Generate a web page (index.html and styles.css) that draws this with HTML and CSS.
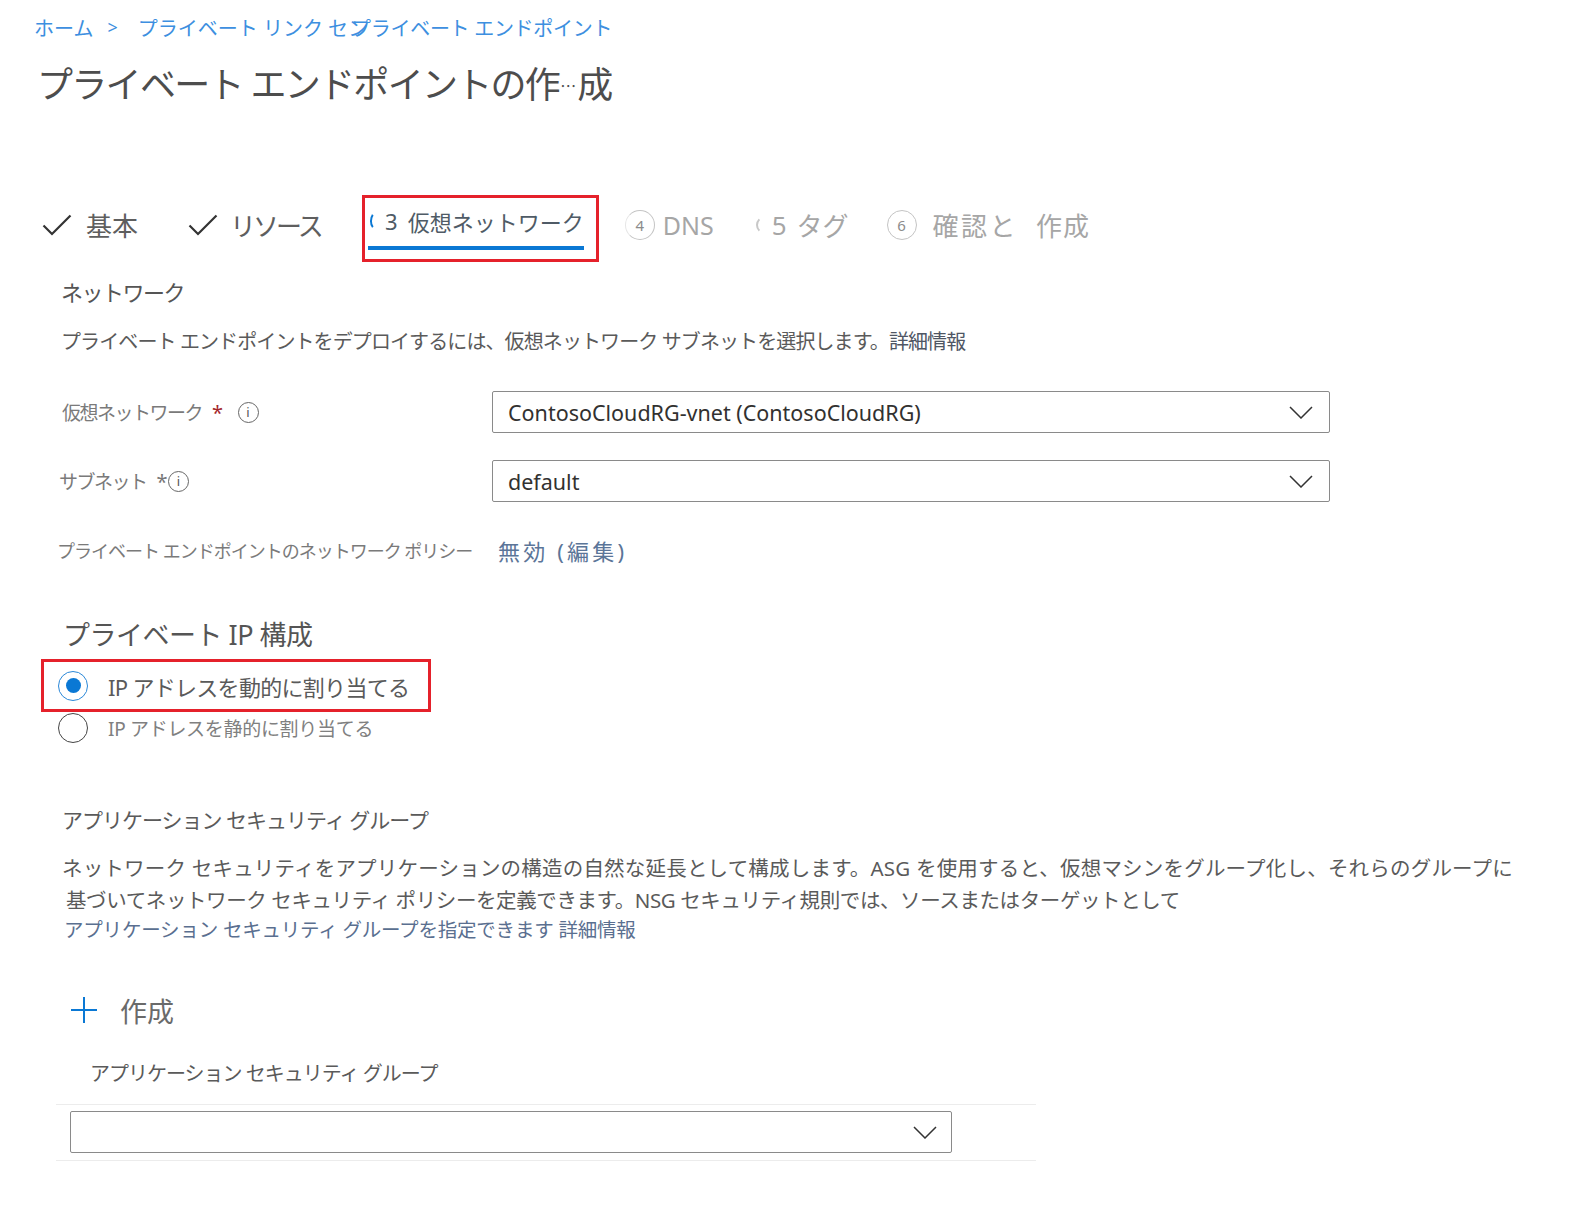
FILE: index.html
```html
<!DOCTYPE html>
<html lang="ja">
<head>
  <meta charset="utf-8">
  <meta name="viewport" content="width=device-width, initial-scale=1.0">
  <link rel="stylesheet" href="styles.css">
</head>
<body>
  <header class="page-head">
    <nav class="crumbs">
      <a class="crumb">ホーム</a>
      <span class="crumb-sep">&gt;</span>
      <a class="crumb">プライベート リンク セン</a>
      <a class="crumb crumb-over">プライベート エンドポイント</a>
    </nav>
    <h1 class="title">プライベート エンドポイントの作<span class="title-dots">⋯</span>成</h1>
  </header>

  <ul class="steps">
    <li class="step step-1">
      <svg class="check" viewBox="0 0 30 22" width="30" height="22"><path d="M1.5 11.5 L10 20 L28.5 1.5" /></svg>
      <span class="step-text">基本</span>
    </li>
    <li class="step step-2">
      <svg class="check" viewBox="0 0 30 22" width="30" height="22"><path d="M1.5 11.5 L10 20 L28.5 1.5" /></svg>
      <span class="step-text narrow">リソース</span>
    </li>
    <li class="step step-current">
      <div class="step-inner">
        <span class="step-arc"></span>
        <span class="step-num">3</span>
        <span class="step-text">仮想ネットワーク</span>
      </div>
    </li>
    <li class="step step-todo step-4">
      <span class="step-circle">4</span>
      <span class="step-text latin">DNS</span>
    </li>
    <li class="step step-todo step-5">
      <span class="step-arc gray"></span>
      <span class="step-num">5</span>
      <span class="step-text">タグ</span>
    </li>
    <li class="step step-todo step-6">
      <span class="step-circle">6</span>
      <span class="step-text">確認と</span>
      <span class="step-text step-last">作成</span>
    </li>
  </ul>

  <main class="content">
    <h2 class="section-title">ネットワーク</h2>
    <p class="section-desc">プライベート エンドポイントをデプロイするには、仮想ネットワーク サブネットを選択します。<span class="more">詳細情報</span></p>

    <div class="form">
      <label class="form-label row-1">仮想ネットワーク <span class="req">*</span> <span class="info">i</span></label>
      <div class="select">
        <span class="select-value">ContosoCloudRG-vnet (ContosoCloudRG)</span>
        <svg class="chevron" viewBox="0 0 24 13" width="24" height="13"><path d="M1 1 L12 12 L23 1" /></svg>
      </div>

      <label class="form-label row-2">サブネット <span class="req plain">*</span><span class="info">i</span></label>
      <div class="select">
        <span class="select-value">default</span>
        <svg class="chevron" viewBox="0 0 24 13" width="24" height="13"><path d="M1 1 L12 12 L23 1" /></svg>
      </div>

      <label class="form-label row-3">プライベート エンドポイントのネットワーク ポリシー</label>
      <div class="form-value"><a class="policy-link">無効 (編集)</a></div>
    </div>

    <h2 class="ip-title">プライベート IP 構成</h2>
    <div class="radio-group">
      <div class="radio-row selected">
        <span class="radio on"></span>
        <span class="radio-text">IP アドレスを動的に割り当てる</span>
      </div>
      <div class="radio-row">
        <span class="radio"></span>
        <span class="radio-text small">IP アドレスを静的に割り当てる</span>
      </div>
    </div>

    <h2 class="asg-title">アプリケーション セキュリティ グループ</h2>
    <p class="asg-desc"><span class="line-wide">ネットワーク セキュリティをアプリケーションの構造の自然な延長として構成します。ASG を使用すると、仮想マシンをグループ化し、それらのグループに</span><br><span class="indent">基づいてネットワーク セキュリティ ポリシーを定義できます。NSG セキュリティ規則では、ソースまたはターゲットとして</span></p>
    <a class="asg-link">アプリケーション セキュリティ グループを指定できます 詳細情報</a>

    <button class="create-btn">
      <svg class="plus" viewBox="0 0 28 28" width="28" height="28"><path d="M14 1 V27 M1 14 H27" /></svg>
      <span>作成</span>
    </button>

    <div class="asg-label">アプリケーション セキュリティ グループ</div>
    <div class="asg-table">
      <div class="select small-select">
        <span class="select-value"></span>
        <svg class="chevron" viewBox="0 0 24 13" width="24" height="13"><path d="M1 1 L12 12 L23 1" /></svg>
      </div>
    </div>
  </main>
</body>
</html>
```

FILE: styles.css
```css
* {
  margin: 0;
  padding: 0;
  box-sizing: border-box;
}

body {
  width: 1575px;
  min-height: 1219px;
  font-family: "Noto Sans", "Noto Sans CJK JP", sans-serif;
  color: #616161;
  background: #fff;
}

/* Header */
.page-head {
  padding: 14px 0 0 34px;
}

.crumbs {
  display: flex;
  align-items: center;
  height: 26px;
  font-size: 20px;
  color: #3d8fe0;
  white-space: nowrap;
}

.crumb-sep {
  margin: 0 20px 0 14px;
  font-size: 18px;
}

.crumb-over {
  margin-left: -17px;
  letter-spacing: -0.3px;
}

.title {
  margin-top: 21px;
  padding-left: 3px;
  font-size: 36px;
  line-height: 48px;
  font-weight: 400;
  letter-spacing: -1.7px;
  color: #4d4d4d;
  white-space: nowrap;
}

.title-dots {
  font-size: 16px;
  line-height: 1;
  letter-spacing: 0;
  margin: 0 1px;
  vertical-align: 6px;
}

/* Wizard steps */
.steps {
  display: flex;
  list-style: none;
  margin-top: 86px;
  padding-left: 42px;
}

.step {
  display: flex;
  align-items: center;
  height: 67px;
  padding-bottom: 8px;
  font-size: 26px;
  color: #5e5e5e;
  white-space: nowrap;
}

.check {
  fill: none;
  stroke: #333;
  stroke-width: 2.2;
  margin-right: 14px;
}

.step-1 { margin-right: 50px; }
.step-2 { margin-right: 41px; }
.step-2 .check { margin-right: 12px; }

.step-text.narrow {
  letter-spacing: -3px;
}

.step-current {
  display: block;
  height: 67px;
  padding: 8px 12px 9px 3px;
  border: 3px solid #e5212b;
  margin-right: 26px;
}

.step-inner {
  display: flex;
  align-items: center;
  width: 216px;
  height: 44px;
  padding-bottom: 10px;
  border-bottom: 4px solid #0a78d4;
  font-size: 22px;
  color: #4f5b66;
}

.step-arc {
  width: 18px;
  height: 18px;
  border-radius: 50%;
  border: 2px solid transparent;
  border-left-color: #0a78d4;
  margin-left: 2px;
}

.step-arc.gray {
  border-left-color: #c8c8c8;
  margin-left: 0;
}

.step-num {
  margin: 0 10px 0 2px;
}

.step-todo {
  color: #a6a6a6;
}

.step-circle {
  display: flex;
  align-items: center;
  justify-content: center;
  width: 30px;
  height: 30px;
  border-radius: 50%;
  border: 1.5px solid #c4c4c4;
  font-size: 15px;
  color: #8c8c8c;
  margin-right: 8px;
}

.step-4 .step-circle { margin-left: 0; border-left-color: #e6e6e6; }
.step-4 { margin-right: 42px; }
.step-4 .latin { font-size: 25px; }

.step-5 { margin-right: 38px; font-size: 26px; }
.step-5 .step-num { margin: 0 10px 0 -2px; }

.step-6 .step-circle { margin-right: 16px; }
.step-6 .step-text { letter-spacing: 2.5px; }
.step-6 .step-last { margin-left: 18px; letter-spacing: 1px; }

/* Content */
.content {
  padding-left: 56px;
}

.section-title {
  margin-top: 15px;
  padding-left: 5px;
  font-size: 22px;
  line-height: 30px;
  font-weight: 400;
  letter-spacing: -1.5px;
  color: #555;
}

.section-desc {
  margin-top: 20px;
  padding-left: 5px;
  font-size: 20px;
  line-height: 30px;
  letter-spacing: -0.9px;
  color: #5a5a5a;
  white-space: nowrap;
}

.more {
  color: #4f5664;
}

/* Form grid */
.form {
  display: grid;
  grid-template-columns: 436px 838px;
  grid-auto-rows: 42px;
  row-gap: 27px;
  margin-top: 34px;
  align-items: center;
}

.form-label {
  display: flex;
  align-items: center;
  font-size: 19px;
  letter-spacing: -1.5px;
  color: #7a7a7a;
  white-space: nowrap;
}

.row-1 { padding-left: 6px; }
.row-2 { padding-left: 3px; }
.row-3 { padding-left: 1px; font-size: 18px; letter-spacing: -1px; }

.req {
  color: #a4262c;
  font-size: 20px;
  margin: 0 16px 0 10px;
}

.req.plain {
  color: #777;
  margin: 0 2px 0 10px;
}

.info {
  display: inline-flex;
  align-items: center;
  justify-content: center;
  width: 21px;
  height: 21px;
  border-radius: 50%;
  border: 1.3px solid #666;
  font-size: 13px;
  letter-spacing: 0;
  color: #555;
}

.select {
  display: flex;
  align-items: center;
  justify-content: space-between;
  height: 42px;
  padding: 0 16px 0 15px;
  border: 1px solid #8a8a8a;
  border-radius: 2px;
  background: #fff;
}

.select-value {
  font-size: 21.5px;
  color: #323130;
  white-space: nowrap;
}

.chevron {
  fill: none;
  stroke: #333;
  stroke-width: 1.5;
}

.form-value {
  padding-left: 6px;
}

.policy-link {
  font-size: 22px;
  letter-spacing: 3.2px;
  color: #5b7598;
}

/* Private IP */
.ip-title {
  margin-top: 46px;
  padding-left: 7px;
  font-size: 27px;
  line-height: 36px;
  font-weight: 400;
  letter-spacing: -0.5px;
  color: #555;
}

.radio-group {
  margin-top: 6px;
}

.radio-row {
  display: flex;
  align-items: center;
  height: 32px;
  padding-left: 2px;
}

.radio-row.selected {
  width: 390px;
  height: 53px;
  margin-left: -15px;
  padding-left: 14px;
  border: 3px solid #e5212b;
}

.radio {
  width: 30px;
  height: 30px;
  border-radius: 50%;
  border: 1.5px solid #444;
  margin-right: 20px;
  display: flex;
  align-items: center;
  justify-content: center;
}

.radio.on {
  border: 1.5px solid #2b88d8;
}

.radio.on::after {
  content: "";
  width: 15px;
  height: 15px;
  border-radius: 50%;
  background: #0a78d4;
}

.radio-text {
  font-size: 22px;
  letter-spacing: -0.7px;
  color: #5a5a5a;
  white-space: nowrap;
}

.radio-text.small {
  font-size: 19px;
  letter-spacing: -0.3px;
  color: #808080;
}

/* Application security group */
.asg-title {
  margin-top: 61px;
  padding-left: 6px;
  font-size: 21px;
  line-height: 30px;
  font-weight: 400;
  letter-spacing: -1px;
  color: #5a5a5a;
}

.asg-desc {
  margin-top: 17px;
  padding-left: 6px;
  font-size: 20.5px;
  line-height: 32px;
  letter-spacing: -0.4px;
  color: #5a5a5a;
  white-space: nowrap;
}

.line-wide {
  letter-spacing: 0.2px;
}

.indent {
  padding-left: 4px;
}

.asg-link {
  display: block;
  padding-left: 8px;
  font-size: 19.5px;
  line-height: 28px;
  letter-spacing: -0.2px;
  color: #5a6f90;
  white-space: nowrap;
}

.create-btn {
  display: flex;
  align-items: center;
  height: 36px;
  margin: 48px 0 0 14px;
  border: none;
  background: none;
  font-family: inherit;
  font-size: 27px;
  color: #6a6a6a;
}

.plus {
  fill: none;
  stroke: #0a78d4;
  stroke-width: 2;
  margin-right: 22px;
}

.asg-label {
  margin-top: 31px;
  padding-left: 34px;
  font-size: 20px;
  line-height: 30px;
  letter-spacing: -1px;
  color: #5a5a5a;
}

.asg-table {
  width: 980px;
  margin-top: 15px;
  padding: 6px 0 7px 14px;
  border-top: 1px solid #ececec;
  border-bottom: 1px solid #ececec;
}

.small-select {
  width: 882px;
  padding-right: 14px;
}
```
